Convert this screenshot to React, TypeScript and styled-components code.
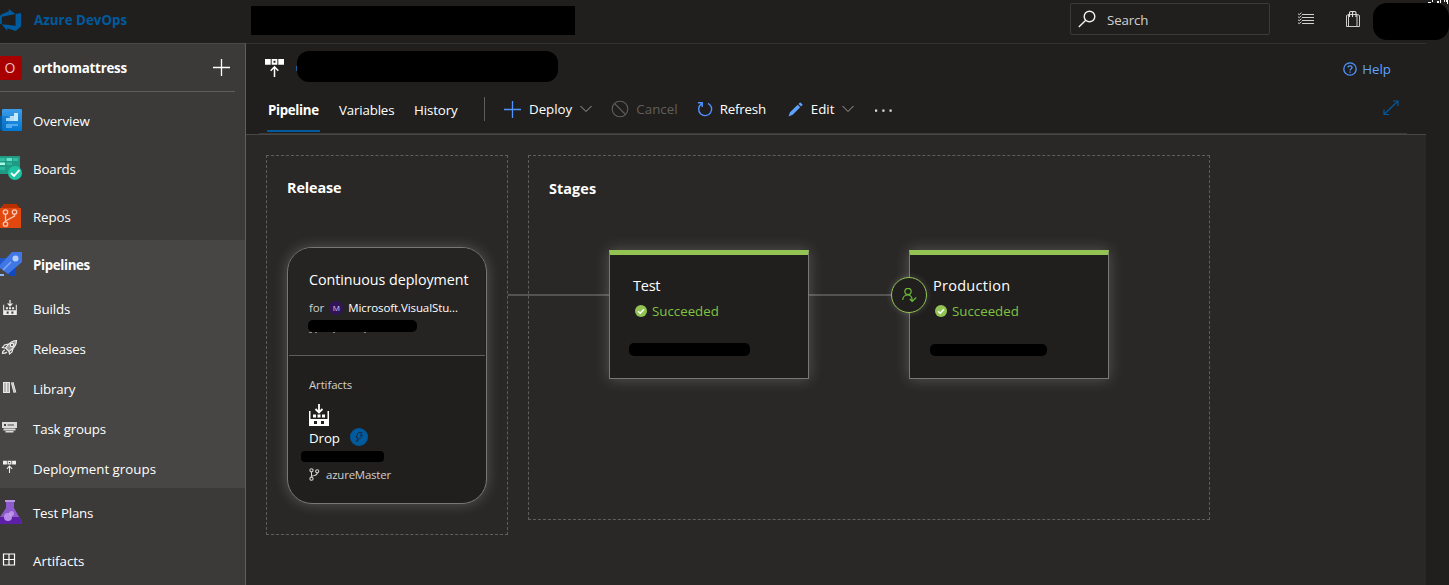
import React from "react";
import styled, { createGlobalStyle, css } from "styled-components";

const Global = createGlobalStyle`
  * { box-sizing: border-box; }
  body { margin: 0; background: #201f1e; overflow: hidden; }
  svg { display: block; flex: none; }
`;

const Page = styled.div`
  width: 1449px;
  height: 585px;
  display: flex;
  flex-direction: column;
  overflow: hidden;
  background: #201f1e;
  color: #fff;
  font-family: "Open Sans", "Noto Sans", sans-serif;
  font-size: 13.3px;
`;

const Text = styled.span<{ $size?: number; $weight?: number; $color?: string; $track?: number }>`
  white-space: nowrap;
  line-height: 20px;
  font-size: ${(p) => p.$size ?? 13.3}px;
  font-weight: ${(p) => p.$weight ?? 400};
  color: ${(p) => p.$color ?? "#fff"};
  letter-spacing: ${(p) => p.$track ?? -0.1}px;
`;

const Redacted = styled.div<{ $w: number; $h: number; $r?: number }>`
  flex: none;
  width: ${(p) => p.$w}px;
  height: ${(p) => p.$h}px;
  border-radius: ${(p) => p.$r ?? 0}px;
  background: #000;
`;

/* Top bar */
const TopBar = styled.header`
  position: relative;
  height: 43px;
  flex: none;
  display: flex;
  align-items: flex-start;
`;
const Brand = styled.div`
  width: 251px;
  height: 40px;
  display: flex;
  align-items: center;
  gap: 13px;
`;
const ScopeSlot = styled.div`
  padding-top: 6px;
  width: 819px;
`;
const SearchBox = styled.div`
  margin-top: 3px;
  width: 200px;
  height: 32px;
  border: 1px solid #3b3a39;
  border-radius: 2px;
  display: flex;
  align-items: center;
  padding-left: 7px;
  gap: 11px;
`;
const SearchText = styled(Text)`
  padding-top: 2px;
`;
const TopIcon = styled.div<{ $gap: number }>`
  margin-left: ${(p) => p.$gap}px;
  padding-top: 10px;
`;
const AccountSlot = styled.div`
  margin-left: 12px;
  padding-top: 3px;
`;
const AccountRemnant = styled.div`
  position: absolute;
  left: 1427px;
  top: 0;
`;

const Body = styled.div`
  flex: 1;
  display: flex;
  min-height: 0;
`;

/* Sidebar */
const Sidebar = styled.nav`
  width: 246px;
  flex: none;
  background: #3b3a39;
  border-top: 1px solid #4a4947;
  border-right: 1px solid #605e5c;
  display: flex;
  flex-direction: column;
`;
const Project = styled.div`
  width: 235px;
  height: 48px;
  flex: none;
  display: flex;
  align-items: center;
  border-bottom: 1px solid #605e5c;
  margin-bottom: 4px;
`;
const ProjectBadge = styled.div`
  width: 22px;
  height: 24px;
  margin-right: 11px;
  border-radius: 0 3px 3px 0;
  background: #a80000;
  display: flex;
  align-items: center;
  justify-content: center;
  padding-right: 2px;
`;
const ProjectAdd = styled.div`
  margin-left: auto;
  margin-right: 5px;
`;
const NavRow = styled.div<{ $sub?: boolean; $active?: boolean }>`
  height: ${(p) => (p.$sub ? 40 : 48)}px;
  flex: none;
  display: flex;
  align-items: center;
  background: ${(p) => (p.$active ? "#484644" : "transparent")};
`;
const NavIcon = styled.div`
  width: 33px;
  height: 24px;
  flex: none;
`;
const NavText = styled(Text)`
  padding-top: 1px;
`;

/* Main column */
const Main = styled.main`
  width: 1180px;
  flex: none;
  display: flex;
  flex-direction: column;
  border-top: 1px solid #323130;
`;
const TitleRow = styled.div`
  height: 46px;
  display: flex;
  align-items: center;
  padding: 0 35px 0 19px;
`;
const TitleBlock = styled.div`
  margin-left: 12px;
  margin-top: -1px;
  display: flex;
  align-items: center;
`;
const TitleRemnant = styled.div`
  width: 1px;
  height: 5px;
  margin-top: 3px;
  background: #1c5f9a;
`;
const Help = styled.div`
  margin-left: auto;
  margin-top: 3px;
  display: flex;
  align-items: center;
  gap: 5px;
`;
const CommandRow = styled.div`
  height: 44px;
  margin: 0 19px 0 13px;
  padding: 0 8px 1px;
  display: flex;
  align-items: stretch;
  border-bottom: 1px solid #3b3a39;
`;
const Tab = styled.div<{ $w: number; $gap: number; $active?: boolean }>`
  width: ${(p) => p.$w}px;
  margin-right: ${(p) => p.$gap}px;
  padding: 10px 0 0 1px;
  ${(p) =>
    p.$active &&
    css`
      border-bottom: 2px solid #005a9e;
    `}
`;
const Separator = styled.div`
  width: 1px;
  height: 24px;
  margin-top: 7px;
  background: #605e5c;
`;
const Command = styled.div<{ $x: number; $gap?: number }>`
  height: 38px;
  margin-left: ${(p) => p.$x}px;
  display: flex;
  align-items: center;
  gap: ${(p) => p.$gap ?? 7}px;
`;
const Expand = styled.div`
  margin: 10px 0 0 auto;
`;

/* Pipeline canvas */
const Canvas = styled.section`
  flex: 1;
  min-height: 0;
  background: #292827;
  border-top: 1px solid #484644;
  padding: 20px 0 0 20px;
  display: flex;
  align-items: flex-start;
  gap: 20px;
`;
const Group = styled.div<{ $w: number; $h: number; $top: number }>`
  flex: none;
  width: ${(p) => p.$w}px;
  height: ${(p) => p.$h}px;
  border: 1px dashed #605e5c;
  padding: ${(p) => p.$top}px 20px 0;
  display: flex;
  flex-direction: column;
  align-items: flex-start;
`;
const ReleaseCard = styled.div`
  margin-top: 49px;
  width: 200px;
  height: 257px;
  flex: none;
  border: 1px solid #797775;
  border-radius: 25px;
  background: #201f1e;
  box-shadow: 0 0 14px rgba(255, 255, 255, 0.22);
  overflow: hidden;
`;
const Trigger = styled.div`
  height: 108px;
  margin: 0 1px;
  padding: 22px 0 0 20px;
  background: #252423;
  border-bottom: 1px solid #605e5c;
  display: flex;
  flex-direction: column;
`;
const ForLine = styled.div`
  display: flex;
  align-items: center;
  height: 20px;
  margin-top: 8px;
`;
const TriggerMask = styled.div`
  margin: 2px 0 0 -1px;
`;
const Avatar = styled.div`
  width: 14px;
  height: 14px;
  margin: 0 5px 0 5px;
  border-radius: 50%;
  background: #32145a;
  display: flex;
  align-items: center;
  justify-content: center;
`;
const ArtifactArea = styled.div`
  padding: 19px 0 0 21px;
  display: flex;
  flex-direction: column;
`;
const ArtifactSource = styled.div`
  padding-top: 9px;
`;
const DropLine = styled.div`
  display: flex;
  align-items: flex-start;
  gap: 10px;
  height: 20px;
  margin-top: 2px;
`;
const ArtifactMask = styled.div`
  margin: 3px 0 0 -8px;
`;
const BranchLine = styled.div`
  display: flex;
  align-items: flex-start;
  gap: 6px;
  margin-top: 3px;
`;
const BranchGlyph = styled.div`
  padding-top: 3px;
`;
const StageRow = styled.div`
  display: flex;
  align-items: flex-start;
  margin: 51px 0 0 -41px;
`;
const Connector = styled.div<{ $w: number }>`
  flex: none;
  width: ${(p) => p.$w}px;
  height: 2px;
  margin-top: 44px;
  background: #555351;
`;
const StageCard = styled.div`
  position: relative;
  flex: none;
  width: 200px;
  height: 129px;
  background: #201f1e;
  border: 1px solid #797775;
  border-top: 5px solid #92c353;
  padding: 21px 0 0 23px;
  box-shadow: 0 0 14px rgba(255, 255, 255, 0.22);
  display: flex;
  flex-direction: column;
`;
const StatusLine = styled.div`
  display: flex;
  align-items: center;
  gap: 5px;
  margin: 5px 0 0 2px;
`;
const StageMask = styled.div<{ $x: number; $y: number }>`
  margin: ${(p) => p.$y}px 0 0 ${(p) => p.$x}px;
`;
const Approval = styled.div`
  position: absolute;
  left: -19px;
  top: 22px;
  width: 36px;
  height: 36px;
  border-radius: 50%;
  border: 1px solid #92c353;
  background: #201f1e;
  box-shadow: 0 0 6px rgba(255, 255, 255, 0.18);
  display: flex;
  align-items: center;
  justify-content: center;
`;

/* Icons */
const Plus = ({ color, size = 17 }: { color: string; size?: number }) => (
  <svg width={size} height={size} viewBox="0 0 17 17" stroke={color} strokeWidth="1.3">
    <path d="M8.5 0V17M0 8.5H17" />
  </svg>
);
const Chevron = () => (
  <svg width="12" height="8" viewBox="0 0 12 8" fill="none" stroke="#a19f9d">
    <path d="M.5 1 6 6.5 11.5 1" />
  </svg>
);
const DevOpsLogo = () => (
  <svg width="21" height="24" viewBox="1 -1 23 26" fill="#005a9e">
    <path d="M0 8.877L2.247 5.91l8.405-3.416V.022l7.37 5.393L2.966 8.338v8.225L0 15.707zm24-4.45v14.651l-5.753 4.9-9.303-3.057v3.056l-5.978-7.416 15.057 1.798V5.415z" />
  </svg>
);
const DeployGroup = ({ size, color = "#fff" }: { size: number; color?: string }) => (
  <svg width={size} height={size} viewBox="0 0 20 20" fill="none">
    <path fill={color} fillRule="evenodd" d="M0 1H6V7H0zM7 1H13V7H7zM9 3V5H11V3zM14 1H20V7H14z" />
    <path stroke={color} strokeWidth="1.6" d="M10 20V9.5M6 13.5 10 9.3 14 13.5" />
  </svg>
);
const Build = ({ w, h, color = "#fff" }: { w: number; h: number; color?: string }) => (
  <svg width={w} height={h} viewBox="0 0 20 22" fill="none">
    <path fill={color} fillRule="evenodd" d="M0 7H1.500V15H18.500V7H20V22H0zM5 17V20H8V17zM12 17V20H15V17z" />
    <path fill={color} d="M4 10.500h3v3H4zM8.500 10.500h3v3h-3zM13 10.500h3v3h-3z" />
    <path stroke={color} strokeWidth="1.800" d="M10 0V8M6.500 5 10 8.500 13.500 5" />
  </svg>
);
const OverviewIcon = () => (
  <svg width="22" height="24" viewBox="0 0 22 24">
    <defs>
      <linearGradient id="ov" x2="0" y2="1">
        <stop stopColor="#3d9ce8" />
        <stop offset="1" stopColor="#0078d4" />
      </linearGradient>
    </defs>
    <path d="M0 8H4V22H0z" fill="#005ba1" />
    <rect x="2" y="1" width="20" height="22" rx="1" fill="url(#ov)" />
    <path d="M2 8H8V22H2z" fill="#0a66b5" opacity=".4" />
    <path d="M6 10H10V8H14V13H6z" fill="#9fd4f8" />
    <path d="M14 5H18V13H14z" fill="#c8e8fc" />
    <path d="M10 8h4v5h-4z" fill="#b4def9" />
    <path d="M6 16H18V18H12V20H6z" fill="#50aaf0" />
  </svg>
);
const BoardsIcon = () => (
  <svg width="23" height="24" viewBox="0 0 23 24">
    <rect x="-2" y="0" width="22" height="18" fill="#219a83" />
    <path d="M0 2H5V5H0zM13 2H18V5H13z" fill="#32bda3" />
    <path d="M6.500 2H12V5H6.500z" fill="#65e4c9" />
    <path d="M0 6.500H5V9H0z" fill="#a5fbe5" />
    <path d="M6.500 6.500H12V9H6.500zM0 11H5V14H0z" fill="#2ab89d" />
    <circle cx="15" cy="17" r="7" fill="#1dc4a3" />
    <path d="M11 17 14 20 19.500 14" fill="none" stroke="#fff" strokeWidth="1.900" />
  </svg>
);
const ReposIcon = () => (
  <svg width="22" height="24" viewBox="0 0 22 24">
    <path d="M3 0H17V2H19V6H1V2H3z" fill="#b83000" />
    <path d="M0 4H21V23.500Q21 24 20 24H0z" fill="#e0480f" />
    <g fill="none" stroke="#f9c7b2" strokeWidth="1.300">
      <circle cx="5.500" cy="8" r="2.200" />
      <circle cx="14.500" cy="8" r="2.200" />
      <circle cx="5.500" cy="20" r="2.200" />
      <path d="M5.500 10V18M14.500 10V12L5.500 17" />
    </g>
  </svg>
);
const PipelinesIcon = () => (
  <svg width="22" height="24" viewBox="0 0 22 24">
    <path d="M0 6H9L2 14H0z" fill="#2458c5" />
    <path d="M16 13V24H10L5 19z" fill="#1448bd" />
    <path d="M12 0H22V10L8 22 0 16V13z" fill="#3f78e6" />
    <circle cx="15.500" cy="6.500" r="3" fill="#b9ccf7" />
    <path d="M3 18 11 10" stroke="#86a9f3" strokeWidth="1.500" />
    <path d="M0 20.500H5V24H0z" fill="#484644" />
    <path d="M0 22H4V24H0z" fill="#8fb3f5" />
  </svg>
);
const RocketIcon = () => (
  <svg width="18" height="24" viewBox="0 0 18 24" fill="none" stroke="#eee" strokeWidth="1.200">
    <path d="M16.500 4.500C12 4.500 9 6.500 5.500 12L9 15.500C14.500 12 16.500 9 16.500 4.500z" fill="#999" />
    <circle cx="12" cy="9" r="1.700" fill="#484644" />
    <path d="M8.500 8 4.500 9 2.500 11.500 5.500 12M13 12.500 12 16 9.500 18 9 15.500M5 14Q2.500 14.500 2.500 17.500 5.500 17.500 7 16" />
  </svg>
);
const LibraryIcon = () => (
  <svg width="18" height="24" viewBox="0 0 18 24" fill="none">
    <path d="M3 6.500h3v10H3zM7 6.500h3v10H7zM11 7l2-.7 3 9.800-2 .8z" fill="#b8b6b4" />
    <path d="M3.500 6.500V16.500M6.500 6.500V16.500M9.500 6.500V16.500M11.500 6.500 14 16.700M13 6 15.800 16.500M3 16.500H10M3 6.500H10" stroke="#e8e6e4" />
  </svg>
);
const TaskIcon = () => (
  <svg width="18" height="24" viewBox="0 0 18 24">
    <path d="M2 6H17V12H2z" fill="#dddbd9" />
    <path d="M4 8h2v2H4zM7.500 8.500H14V9.500H7.500z" fill="#484644" />
    <path d="M3.500 12.500H15.500V14.500H3.500zM5.500 15H13.500V16.500H5.500z" fill="#dddbd9" />
  </svg>
);
const FlaskIcon = () => (
  <svg width="22" height="24" viewBox="0 0 22 24">
    <path d="M6 2H14V8L22 22Q22 24 20 24H0V17L6 8z" fill="#8d5acb" />
    <path d="M0 17H19.200L22 22Q22 24 20 24H0z" fill="#5c1fa6" />
    <path d="M5 0H15V2H5z" fill="#b796e0" />
    <circle cx="8" cy="17" r="4" fill="#b98ce8" />
    <circle cx="11.500" cy="13.500" r="2.500" fill="#c9a6ee" opacity=".7" />
  </svg>
);
const ArtifactsIcon = () => (
  <svg width="18" height="24" viewBox="0 0 18 24" fill="none" stroke="#fff" strokeWidth="1.200">
    <path d="M3.500 6H14.500V17H3.500zM9 6V17M3.500 11.500H14.500" />
  </svg>
);
const SearchIcon = () => (
  <svg width="18" height="18" viewBox="0 0 18 18" fill="none" stroke="#f3f2f1" strokeWidth="1.400">
    <circle cx="11.500" cy="6.500" r="5.300" />
    <path d="M7.500 10.500.800 17" />
  </svg>
);
const ListIcon = () => (
  <svg width="18" height="18" viewBox="0 0 18 18" fill="none" stroke="#d2d0ce">
    <path d="M5 4.500H17M5 7.500H17M5 10.500H17M5 13.500H17" />
    <path d="M1 3.700 2.200 4.700 4.500 2.700M1 6.700 2.200 7.700 4.500 5.700M1 9.700 2.200 10.700 4.500 8.700M1 12.700 2.200 13.700 4.500 11.700" strokeWidth="1" />
  </svg>
);
const BagIcon = () => (
  <svg width="16" height="18" viewBox="0 0 16 18" fill="none" stroke="#e1dfdd" strokeWidth="1.100">
    <path d="M1.500 5.500 3.500 4.500H12.500L14.500 5.500V16.500H1.500zM3.500 4.500V16.500M12 4.500V16.500" strokeWidth=".9" />
    <path d="M4.500 7V3Q4.500 1.500 6 1.500H9.500Q11 1.500 11 3V7M7.500 7V3Q7.500 1.500 9 1.500" />
  </svg>
);
const HelpIcon = () => (
  <svg width="14" height="14" viewBox="0 0 14 14" fill="none" stroke="#4f93ff" strokeWidth="1.300">
    <circle cx="7" cy="7" r="6.200" />
    <path d="M5 5.600Q5 3.800 7 3.800T9 5.500Q9 6.400 8 7T7 8.500M7 9.500V10.700" />
  </svg>
);
const ExpandIcon = () => (
  <svg width="16" height="16" viewBox="0 0 16 16" fill="none" stroke="#005a9e" strokeWidth="1.200">
    <path d="M1 14.500 15 1M10 1H15V6M1 9.500V14.500H6" />
  </svg>
);
const CancelIcon = () => (
  <svg width="18" height="18" viewBox="0 0 18 18" fill="none" stroke="#605e5c" strokeWidth="1.100">
    <circle cx="9" cy="9" r="7.800" />
    <path d="M3.500 3.500 14.500 14.500" />
  </svg>
);
const RefreshIcon = () => (
  <svg width="16" height="16" viewBox="0 0 16 16" fill="none" stroke="#4f93ff" strokeWidth="1.400">
    <path d="M11 2.300A6.500 6.500 0 1 1 4.500 2.800M1 1.700H5.200V6" />
  </svg>
);
const PencilIcon = () => (
  <svg width="15" height="15" viewBox="0 0 15 15" fill="#5ea2ff">
    <path d="M2 10.300 9.700 2.700 12.200 5.200 4.700 12.800 .5 14.500zM10.500 1.900 11.700.7Q12.200.2 12.700.7L14.300 2.300Q14.800 2.800 14.300 3.300L13.100 4.500z" />
  </svg>
);
const MoreIcon = () => (
  <svg width="18" height="5" viewBox="0 0 18 5" fill="#e1dfdd">
    <path d="M0 2.500h2.200v2.200H0zM7.300 2.500h2.200v2.200H7.300zM14.500 2.500h2.200v2.200h-2.200z" />
  </svg>
);
const CheckBadge = () => (
  <svg width="12" height="12" viewBox="0 0 12 12">
    <circle cx="6" cy="6" r="6" fill="#92c353" />
    <path d="M3 6.200 5.200 8.200 9 4.300" fill="none" stroke="#fff" strokeWidth="1.500" />
  </svg>
);
const BoltBadge = () => (
  <svg width="18" height="18" viewBox="0 0 18 18">
    <circle cx="9" cy="9" r="9" fill="#005a9e" />
    <path d="M8.500 4.500H12L10.300 7.500H12.500L6.500 14 8 9.500H6z" fill="none" stroke="#1c2d40" strokeWidth="1" />
  </svg>
);
const BranchIcon = () => (
  <svg width="11" height="13" viewBox="0 0 11 13" fill="none" stroke="#d2d0ce" strokeWidth="1.100">
    <circle cx="2.500" cy="2.300" r="1.600" />
    <circle cx="8.200" cy="3.300" r="1.600" />
    <circle cx="2.500" cy="10.700" r="1.600" />
    <path d="M2.500 4V9M8.200 5Q8.200 7.500 3 8" />
  </svg>
);
const ApproverIcon = () => (
  <svg width="15" height="15" viewBox="0 0 15 15" fill="none" stroke="#6bb936" strokeWidth="1.200">
    <circle cx="6" cy="3.500" r="3.200" />
    <path d="M.7 12Q1 7 6 7 9 7 10 10.500V13.500M7.800 11 10.200 13.500 14.200 9.500" />
  </svg>
);

const SmallIcon = styled.div`
  padding: 4px 0 0 3px;
`;

type NavItem = {
  label: string;
  icon: React.ReactNode;
  sub?: boolean;
  active?: boolean;
  bold?: boolean;
  track?: number;
};

const navItems: NavItem[] = [
  { label: "Overview", icon: <OverviewIcon />, track: -0.12 },
  { label: "Boards", icon: <BoardsIcon />, track: -0.2 },
  { label: "Repos", icon: <ReposIcon /> },
  { label: "Pipelines", icon: <PipelinesIcon />, active: true, bold: true, track: -0.35 },
  { label: "Builds", icon: <SmallIcon><Build w={14} h={15} color="#eee" /></SmallIcon>, sub: true, active: true },
  { label: "Releases", icon: <RocketIcon />, sub: true, active: true, track: -0.16 },
  { label: "Library", icon: <LibraryIcon />, sub: true, active: true, track: -0.16 },
  { label: "Task groups", icon: <TaskIcon />, sub: true, active: true, track: -0.16 },
  { label: "Deployment groups", icon: <SmallIcon><DeployGroup size={13} color="#eee" /></SmallIcon>, sub: true, active: true, track: 0.02 },
  { label: "Test Plans", icon: <FlaskIcon />, track: -0.25 },
  { label: "Artifacts", icon: <ArtifactsIcon />, track: 0.02 },
];

type StageProps = { name: string; track: number; maskWidth: number; maskHeight: number; maskX: number; maskY: number; approved?: boolean };

function Stage({ name, track, maskWidth, maskHeight, maskX, maskY, approved }: StageProps) {
  return (
    <StageCard>
      {approved && (
        <Approval>
          <ApproverIcon />
        </Approval>
      )}
      <Text $size={14.5} $track={track}>{name}</Text>
      <StatusLine>
        <CheckBadge />
        <Text $color="#7fc241" $track={0}>Succeeded</Text>
      </StatusLine>
      <StageMask $x={maskX} $y={maskY}>
        <Redacted $w={maskWidth} $h={maskHeight} $r={5} />
      </StageMask>
    </StageCard>
  );
}

export default function App() {
  return (
    <Page>
      <Global />
      <TopBar>
        <Brand>
          <DevOpsLogo />
          <Text $weight={700} $color="#005a9e" $track={0.05}>Azure DevOps</Text>
        </Brand>
        <ScopeSlot>
          <Redacted $w={324} $h={29} />
        </ScopeSlot>
        <SearchBox>
          <SearchIcon />
          <SearchText $color="#d2d0ce" $track={-0.15}>Search</SearchText>
        </SearchBox>
        <TopIcon $gap={27}>
          <ListIcon />
        </TopIcon>
        <TopIcon $gap={30}>
          <BagIcon />
        </TopIcon>
        <AccountSlot>
          <Redacted $w={76} $h={37} $r={14} />
        </AccountSlot>
        <AccountRemnant>
          <svg width="22" height="5" viewBox="0 0 22 5" fill="#fff">
            <path d="M1 2h3v1H1zM5 0h1v2H5zM10 1h2v2h-2zM13 0h1v3h-1zM17 0h1v2h-1zM19 0h2v4h-1V2h-1z" />
          </svg>
        </AccountRemnant>
      </TopBar>
      <Body>
        <Sidebar>
          <Project>
            <ProjectBadge>
              <Text $size={14} $color="#f0c0c0">O</Text>
            </ProjectBadge>
            <NavText $weight={700} $track={-0.22}>orthomattress</NavText>
            <ProjectAdd>
              <Plus color="#fff" />
            </ProjectAdd>
          </Project>
          {navItems.map((n) => (
            <NavRow key={n.label} $sub={n.sub} $active={n.active}>
              <NavIcon>{n.icon}</NavIcon>
              <NavText $weight={n.bold ? 700 : 400} $track={n.track}>{n.label}</NavText>
            </NavRow>
          ))}
        </Sidebar>
        <Main>
          <TitleRow>
            <DeployGroup size={19} />
            <TitleBlock>
              <TitleRemnant />
              <Redacted $w={261} $h={31} $r={12} />
            </TitleBlock>
            <Help>
              <HelpIcon />
              <Text $color="#5ea2ff" $track={0}>Help</Text>
            </Help>
          </TitleRow>
          <CommandRow>
            <Tab $w={53} $gap={18} $active>
              <Text $weight={700} $track={-0.33}>Pipeline</Text>
            </Tab>
            <Tab $w={57} $gap={18}>
              <Text $track={-0.16}>Variables</Text>
            </Tab>
            <Tab $w={45} $gap={26}>
              <Text>History</Text>
            </Tab>
            <Separator />
            <Command $x={19} $gap={8}>
              <Plus color="#4f93ff" />
              <Text $track={0}>Deploy</Text>
              <Chevron />
            </Command>
            <Command $x={19}>
              <CancelIcon />
              <Text $color="#605e5c" $track={0.05}>Cancel</Text>
            </Command>
            <Command $x={19}>
              <RefreshIcon />
              <Text $track={-0.2}>Refresh</Text>
            </Command>
            <Command $x={22} $gap={8}>
              <PencilIcon />
              <Text $track={0}>Edit</Text>
              <Chevron />
            </Command>
            <Command $x={21}>
              <MoreIcon />
            </Command>
            <Expand>
              <ExpandIcon />
            </Expand>
          </CommandRow>
          <Canvas>
            <Group $w={242} $h={380} $top={22}>
              <Text $weight={700} $size={14.4} $track={-0.12}>Release</Text>
              <ReleaseCard>
                <Trigger>
                  <Text $size={14.3} $track={-0.05}>Continuous deployment</Text>
                  <ForLine>
                    <Text $size={11.5} $color="#d2d0ce">for</Text>
                    <Avatar>
                      <Text $size={8} $color="#d8c8ee">M</Text>
                    </Avatar>
                    <Text $size={11.5}>Microsoft.VisualStu...</Text>
                  </ForLine>
                  <TriggerMask>
                    <Redacted $w={109} $h={12} $r={5} />
                    <svg width="109" height="1" viewBox="0 0 109 1" fill="#8a8886">
                      <path d="M1 0h3v1H1zM7 0h2v1H7zM25 0h2v1h-2zM56 0h2v1h-2z" />
                    </svg>
                  </TriggerMask>
                </Trigger>
                <ArtifactArea>
                  <Text $size={11.4} $color="#d2d0ce">Artifacts</Text>
                  <ArtifactSource>
                    <Build w={20} h={22} />
                  </ArtifactSource>
                  <DropLine>
                    <Text>Drop</Text>
                    <BoltBadge />
                  </DropLine>
                  <ArtifactMask>
                    <Redacted $w={83} $h={11} $r={4} />
                  </ArtifactMask>
                  <BranchLine>
                    <BranchGlyph>
                      <BranchIcon />
                    </BranchGlyph>
                    <Text $size={11.4} $color="#d2d0ce" $track={-0.17}>azureMaster</Text>
                  </BranchLine>
                </ArtifactArea>
              </ReleaseCard>
            </Group>
            <Group $w={682} $h={365} $top={23}>
              <Text $weight={700} $size={14.4} $track={0.08}>Stages</Text>
              <StageRow>
                <Connector $w={101} />
                <Stage name="Test" track={-0.25} maskWidth={121} maskHeight={13} maskX={-4} maskY={22} />
                <Connector $w={100} />
                <Stage name="Production" track={0.28} maskWidth={117} maskHeight={12} maskX={-3} maskY={23} approved />
              </StageRow>
            </Group>
          </Canvas>
        </Main>
      </Body>
    </Page>
  );
}
